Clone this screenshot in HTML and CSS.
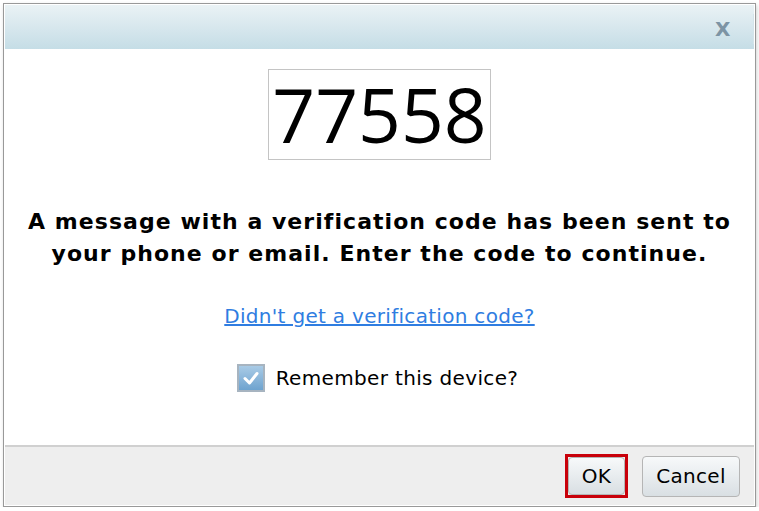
FILE: index.html
```html
<!DOCTYPE html>
<html>
<head>
<meta charset="utf-8">
<link rel="stylesheet" href="styles.css">
</head>
<body>
<div class="dialog">
  <div class="titlebar">
    <span class="close">X</span>
  </div>
  <div class="content">
    <div class="code">77558</div>
    <p class="message">A message with a verification code has been sent to your phone or email. Enter the code to continue.</p>
    <a class="link" href="#">Didn't get a verification code?</a>
    <label class="remember">
      <span class="checkbox">
        <svg width="20" height="20" viewBox="0 0 20 20"><path d="M4 10.5 L8.5 15 L16 5.5" fill="none" stroke="#fff" stroke-width="3" stroke-linecap="round" stroke-linejoin="round"/></svg>
      </span>
      <span>Remember this device?</span>
    </label>
  </div>
  <div class="footer">
    <span class="focus"><button class="btn">OK</button></span>
    <button class="btn cancel">Cancel</button>
  </div>
</div>
</body>
</html>
```
FILE: styles.css
```css
html, body {
  margin: 0;
  padding: 0;
  background: #fff;
}
body {
  padding: 3px 3px 0 3px;
  font-family: "DejaVu Sans", Verdana, sans-serif;
}
.dialog {
  display: flex;
  flex-direction: column;
  background: #fff;
  border: 1px solid #999;
  box-shadow: 1px 2px 4px rgba(0,0,0,0.18);
  padding: 1px;
  box-sizing: border-box;
  width: 753px;
  height: 504px;
}
.titlebar {
  height: 44px;
  background: linear-gradient(#eaf2f5, #c5dde6);
  display: flex;
  align-items: center;
  justify-content: flex-end;
  flex-shrink: 0;
}
.close {
  font-family: "DejaVu Sans", sans-serif;
  font-weight: bold;
  font-size: 20px;
  color: #7d94a4;
  border-right: 1px solid #d4e4ea;
  line-height: 30px;
  height: 30px;
  margin-top: 4px;
  width: 28px;
  padding-right: 10px;
  text-align: left;
}
.content {
  flex: 1;
  display: flex;
  flex-direction: column;
  align-items: center;
}
.code {
  margin-top: 20px;
  width: 221px;
  height: 89px;
  border: 1px solid #c4c4c4;
  font-family: "Open Sans", sans-serif;
  font-size: 75px;
  line-height: 89px;
  text-align: center;
  color: #000;
}
.message {
  margin: 46px 0 0 0;
  width: 730px;
  text-align: center;
  font-weight: bold;
  font-size: 22px;
  letter-spacing: 1.05px;
  line-height: 32px;
  color: #000;
}
.link {
  margin-top: 34px;
  font-size: 20px;
  letter-spacing: 0.3px;
  color: #2f7de1;
  text-decoration: underline;
  line-height: 24px;
}
.remember {
  margin-top: 36px;
  display: flex;
  align-items: center;
  gap: 11px;
  font-size: 20px;
  letter-spacing: 0.35px;
  color: #000;
  margin-left: -4px;
}
.checkbox {
  width: 24px;
  height: 24px;
  border: 2px solid #a7b4c0;
  background: linear-gradient(#a9cbe6, #6ea3cf);
  display: flex;
  align-items: center;
  justify-content: center;
}
.footer {
  height: 58px;
  background: #eeeeee;
  border-top: 2px solid #d0d0d0;
  display: flex;
  justify-content: flex-end;
  align-items: center;
  gap: 14px;
  padding-right: 14px;
  flex-shrink: 0;
}
.focus {
  border: 3px solid #c8000a;
  display: flex;
}
.btn {
  font-family: "DejaVu Sans", Verdana, sans-serif;
  font-size: 20px;
  letter-spacing: 0.3px;
  color: #000;
  background: linear-gradient(#f7f9fa, #d9dfe3);
  border: 1px solid #b5b5b5;
  border-radius: 4px;
  padding: 0;
  margin: 0;
}
.focus .btn {
  height: 38px;
  width: 57px;
}
.cancel {
  width: 98px;
  height: 41px;
}
```
